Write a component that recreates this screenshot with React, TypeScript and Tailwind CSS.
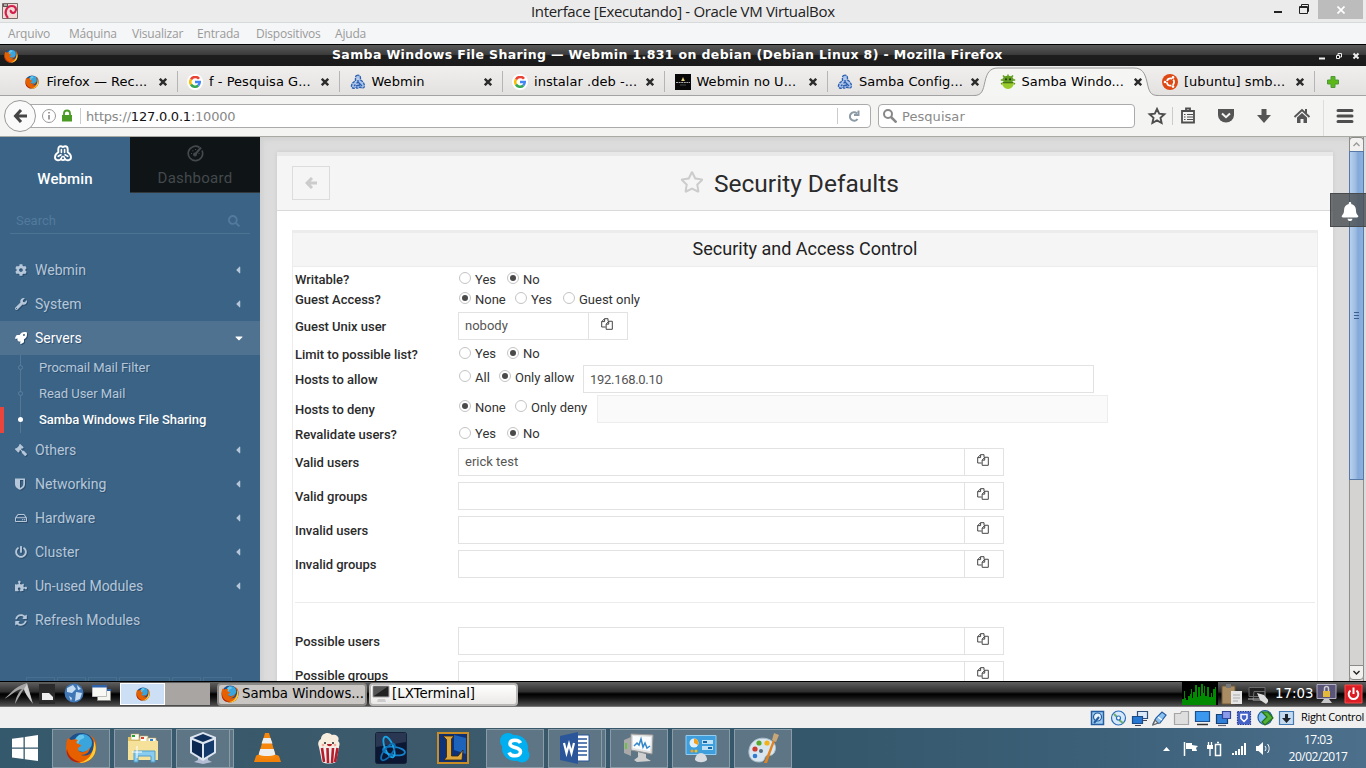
import type { ReactNode } from "react";
import {
  FaBell, FaCaretDown, FaCaretLeft, FaCog, FaGavel, FaPowerOff, FaPuzzlePiece,
  FaRegHdd, FaRegStar, FaRocket, FaSearch, FaShieldAlt, FaSyncAlt, FaWrench,
} from "react-icons/fa";

/* ---------- small drawings ---------- */

function Firefox({ className }: { className: string }) {
  return (
    <svg viewBox="0 0 32 32" className={className}>
      <circle cx="16" cy="16" r="15" fill="#1d4f8c" />
      <circle cx="18" cy="11" r="9" fill="#3aa5dc" />
      <path d="M14 3c4-1 6 1 5 3l-4 2-2 4-5-2z" fill="#64c6ec" />
      <path d="M3 6c1 1 2 1 3 2 3-1 5-1 7 0-2 2-2 3 0 4 2 0 3 1 3 2l-3 2c0 3 2 5 6 4 3-1 5-3 6-5 0 5-4 8-9 8 6 2 12-1 13-9 0-5-2-9-5-11 6 2 8 8 7 14-1 8-7 14-15 14C8 31 1 25 1 17c0-4 0-8 2-11z" fill="#e66000" />
      <path d="M29 9c3 6 2 13-2 17-4 4-9 5-13 5 8-2 15-7 15-22z" fill="#ffcb33" />
      <path d="M2 17c1 7 7 12 14 13C8 32 0 25 2 17z" fill="#b3260e" />
    </svg>
  );
}

function Google() {
  return (
    <span className="flex h-4 w-4 items-center justify-center rounded-full bg-white">
      <svg viewBox="0 0 24 24" className="h-3 w-3" fill="none" strokeWidth="5">
        <path d="M20 5.5A9.5 9.5 0 0 0 4 7" stroke="#ea4335" />
        <path d="M4 7a9.5 9.5 0 0 0 0 10" stroke="#fbbc05" />
        <path d="M4 17a9.5 9.5 0 0 0 14.500 2" stroke="#34a853" />
        <path d="M18.500 19a9.500 9.500 0 0 0 3-7H12" stroke="#4285f4" />
      </svg>
    </span>
  );
}

function WebminMark({ className }: { className: string }) {
  return (
    <svg viewBox="0 0 18 17" className={className} fill="none" stroke="currentColor" strokeWidth="1.900" strokeLinecap="round" strokeLinejoin="round">
      <path d="M4.300 7.200V4.200C4.300 2.400 5.200 1.200 6.700 1.200c1 0 1.700.4 2.300 1 .6-.6 1.300-1 2.300-1 1.500 0 2.400 1.200 2.400 3v3c2 1.200 3.300 3.200 3.300 5 0 1.700-1 2.600-2.200 2.900-1.500.4-2.800 0-3.700-1-.6.600-1.200 1-2.100 1s-1.500-.4-2.100-1c-.9 1-2.200 1.400-3.700 1C2 14.800 1 13.900 1 12.200c0-1.800 1.300-3.800 3.300-5z" />
      <path d="M7.400 4.500v3M10.600 4.500v3M4.200 11.300l2.800-1.500M13.800 11.300L11 9.800M6.900 14.100l1.300-2.600M11.100 14.100l-1.300-2.600" strokeWidth="1.600" />
    </svg>
  );
}

function WebminFav() {
  return (
    <svg viewBox="0 0 16 16" className="h-4 w-4">
      <path d="M6.500 1.500c2-1 4 0 4 2.500v2c2 1 4 3.500 4 6 0 2.500-3 2.500-4.500 1-1.500 1.500-3 1.500-4 .5C3.500 15 1 14 1.500 11.500 2 9 3.500 8 5.500 7c0-2-.5-4.500 1-5.500z" fill="#a9c3ea" stroke="#2c5fae" strokeWidth="1.300" strokeDasharray="3 .8" />
      <path d="M8 4v4l-4 4M8 8l4 4M6 12l4-1" stroke="#2c5fae" strokeWidth="1.300" fill="none" />
      <path d="M8 4v2M5.500 9.500l1 1" stroke="#fff" strokeWidth="1.200" />
    </svg>
  );
}

function Spider() {
  return (
    <svg viewBox="0 0 16 16" className="h-4 w-4">
      <path d="M3 1.500l2 2M8 .5v3M13 1.500l-2 2M.8 6h14.400M1 10l2-1M15 10l-2-1" stroke="#5f9a1c" strokeWidth="1.500" />
      <ellipse cx="8" cy="5.500" rx="5.500" ry="3.800" fill="#62a022" />
      <path d="M2 8.500h12c0 3.500-2.700 6.500-6 6.500s-6-3-6-6.500z" fill="#9acb2d" />
      <path d="M3 8h10v1.300H3z" fill="#47701a" />
      <circle cx="6" cy="5.300" r="1.100" fill="#263c0c" /><circle cx="10" cy="5.300" r="1.100" fill="#263c0c" />
    </svg>
  );
}

function Ubuntu() {
  return (
    <svg viewBox="0 0 16 16" className="h-4 w-4">
      <circle cx="8" cy="8" r="8" fill="#dd4814" />
      <circle cx="8.500" cy="8" r="3.600" fill="none" stroke="#fff" strokeWidth="1.800" strokeDasharray="6.300 1.200" strokeDashoffset="3" />
      <circle cx="3" cy="8" r="1.300" fill="#fff" /><circle cx="11" cy="3.400" r="1.300" fill="#fff" /><circle cx="11" cy="12.600" r="1.300" fill="#fff" />
    </svg>
  );
}

function DarkFav() {
  return (
    <svg viewBox="0 0 16 16" className="h-4 w-4">
      <path d="M0 0h16v16H0z" fill="#080808" />
      <path d="M8 3l1.800 4H6.200z" fill="#e8d27a" />
      <path d="M1 8.500h14" stroke="#aaa" strokeDasharray="2 .6" /><path d="M5 11h6" stroke="#444" />
    </svg>
  );
}

function CopyIcon() {
  return (
    <svg viewBox="0 0 14 14" className="h-3 w-3 text-[#444]" fill="none" stroke="currentColor" strokeWidth="1.150">
      <path d="M5.500 10.500H.8V4.200L4.200.8h4v3M4.200.8v3.400H.8M6 7.200l3-3.400h4.200v9.400H6zM9 3.800v3.400H6" />
    </svg>
  );
}

/* ---------- VirtualBox host window ---------- */

function HostTitle() {
  return (
    <header className="flex h-[23px] items-center border-b border-[#d7dadb] bg-[#ebebeb] font-['Open_Sans',sans-serif]">
      <div className="w-[531px] pl-0.5">
        <svg viewBox="0 0 16 16" className="h-4 w-4">
          <path d="M.5.5h15v15H.5z" fill="#f3d9d6" stroke="#7b6965" />
          <path d="M6 15C1 9 5 3 10 3c4 0 5 4 3 6-2 2-5 0-4-2" fill="none" stroke="#d2204c" strokeWidth="2.200" />
          <path d="M1 1h5v3H1z" fill="#5e5552" /><path d="M2 2h3" stroke="#fff" />
        </svg>
      </div>
      <h1 className="flex-1 whitespace-nowrap text-[15px] tracking-[-0.330px] text-[#222]">Interface [Executando] - Oracle VM VirtualBox</h1>
      <div className="flex h-full items-start">
        <svg viewBox="0 0 46 19" className="h-[19px] w-[46px]" fill="none" stroke="#222">
          <path d="M2 12h8" strokeWidth="2" /><path d="M27.500 6.500h8v7h-8zM27 7.500h9M29.500 6V4.500h7v7H36" />
        </svg>
        <div className="mr-[3px] flex h-[19px] w-[45px] items-center justify-center bg-[#bcbcbc]">
          <svg viewBox="0 0 8 8" className="h-2 w-2" stroke="#fff" strokeWidth="1.700"><path d="M.5.500l7 7M7.500.500l-7 7" /></svg>
        </div>
      </div>
    </header>
  );
}

const hostMenu = [
  { label: "Arquivo", cls: "w-[61px]" },
  { label: "Máquina", cls: "w-[63px]" },
  { label: "Visualizar", cls: "w-[65px]" },
  { label: "Entrada", cls: "w-[59px]" },
  { label: "Dispositivos", cls: "w-[79px]" },
  { label: "Ajuda", cls: "w-[60px]" },
];

function HostMenu() {
  return (
    <nav className="flex h-[21px] items-center bg-[#f5f6f7] pl-2 font-['Open_Sans',sans-serif] text-xs tracking-[-0.2px] text-[#9a9a9a]">
      {hostMenu.map((m) => <span key={m.label} className={m.cls}>{m.label}</span>)}
    </nav>
  );
}

/* ---------- Firefox ---------- */

function GuestTitle() {
  return (
    <div className="flex h-[22px] items-center border-t border-black bg-[linear-gradient(#5a5a5a,#3c3c3c_45%,#1e1e1e_50%,#1a1a1a)] pr-1.5">
      <div className="w-[332px] pl-1"><Firefox className="h-3.5 w-3.5" /></div>
      <div className="flex-1 whitespace-nowrap pb-px font-['DejaVu_Sans',sans-serif] text-[12.500px] font-bold leading-none tracking-[0.370px] text-white">
        Samba Windows File Sharing — Webmin 1.831 on debian (Debian Linux 8) - Mozilla Firefox
      </div>
      <svg viewBox="0 0 42 8" className="h-2 w-[42px]" fill="none" stroke="#eee">
        <path d="M1 6.500h6" strokeWidth="2" /><path d="M18.500 3.500h3v3h-3zM20 3V1.500h3.500V5H22" /><path d="M35.500 1.500l5 5M40.500 1.500l-5 5" strokeWidth="2" />
      </svg>
    </div>
  );
}

const tabs: { title: string; icon: ReactNode; active?: boolean }[] = [
  { title: "Firefox — Rec...", icon: <Firefox className="h-3.5 w-3.5" /> },
  { title: "f - Pesquisa G...", icon: <Google /> },
  { title: "Webmin", icon: <WebminFav /> },
  { title: "instalar .deb -...", icon: <Google /> },
  { title: "Webmin no U...", icon: <DarkFav /> },
  { title: "Samba Config...", icon: <WebminFav /> },
  { title: "Samba Windo...", icon: <Spider />, active: true },
  { title: "[ubuntu] smb...", icon: <Ubuntu /> },
];

function TabBar() {
  return (
    <div className="flex h-[30px] bg-[linear-gradient(#f0efee,#e3e1df)] pl-[15px] font-['DejaVu_Sans',sans-serif] text-[13px] text-black shadow-[inset_0_-1px_0_#a3a3a3]">
      {tabs.map((t, i) => (
        <div key={i} className="relative flex w-[162.500px] shrink-0 items-center pl-[9.500px] pt-0.5">
          {t.active && (
            <svg viewBox="0 0 184 30" className="absolute -left-4 top-0 h-[30px] w-[184px]">
              <path d="M0 29.500c8 0 9-5 11-14S16 2 24 2h136c8 0 11 5 13 14s3 13.500 11 13.500V30H0z" fill="#f5f5f4" />
              <path d="M0 29.500c8 0 9-5 11-14S16 2 24 2h136c8 0 11 5 13 14s3 13.500 11 13.500" fill="none" stroke="#9a9a9a" />
            </svg>
          )}
          <span className="relative flex w-[22px] shrink-0 items-center">{t.icon}</span>
          <span className="relative w-[112px] shrink-0 whitespace-nowrap pb-px tracking-[0.030px]">{t.title}</span>
          <svg viewBox="0 0 8 8" className="relative h-2 w-2 shrink-0" stroke="#2c2c2c" strokeWidth="2.400"><path d="M.8.800l6.400 6.400M7.200.800L.8 7.200" /></svg>
          {i !== 5 && i !== 6 && <i className="absolute right-0 top-[5px] h-[21px] w-px bg-[#b5b5b5]" />}
        </div>
      ))}
      <svg viewBox="0 0 12 12" className="ml-3 mt-2.5 h-3 w-3"><path d="M4 .500h4V4h3.500v4H8v3.500H4V8H.5V4H4z" fill="#5cb815" stroke="#4c9a3d" /></svg>
    </div>
  );
}

function ToolbarIcons() {
  return (
    <svg viewBox="0 0 231 40" className="h-10 w-[231px]" fill="#555">
      <path d="M22 13l2.200 4.700 5.200.6-3.900 3.500 1.100 5.200L22 24.400 17.400 27l1.100-5.200-3.900-3.500 5.200-.6z" fill="none" stroke="#4e4e4e" strokeWidth="1.900" />
      <path d="M37.500 11v18" stroke="#ccc" />
      <path d="M47 15h12v11.500H47zM51 14.500v-2h4v2" fill="none" stroke="#4e4e4e" strokeWidth="1.800" />
      <path d="M49 18.500h1.500M52 18.500h6M49 21h1.500M52 21h6M49 23.500h1.500M52 23.500h6" stroke="#4e4e4e" strokeWidth="1.200" />
      <path d="M83 13h16v6a8 7.500 0 0 1-16 0z" />
      <path d="M87 17.500l4 3.700 4-3.700" fill="none" stroke="#f5f5f4" strokeWidth="2" />
      <path d="M126.500 13h5v6h4.500l-7 8-7-8h4.500z" />
      <path d="M159.500 21l7.500-7 7.500 7" fill="none" stroke="#555" strokeWidth="1.900" />
      <path d="M162 21.500l5-4.500 5 4.500V27h-3.500v-4h-3v4H162zM170 13h2v4h-2z" />
      <path d="M188.500 4v36" stroke="#ddd" />
      <path d="M203 14.500h14M203 20h14M203 25.500h14" stroke="#4e4e4e" strokeWidth="3" strokeLinecap="round" />
    </svg>
  );
}

function Toolbar() {
  return (
    <div className="flex h-[41px] items-center border-b border-[#a9aaa3] bg-[#f4f4f2] pl-1 font-['DejaVu_Sans',sans-serif] text-[13px]">
      <div className="z-10 flex h-8 w-8 shrink-0 items-center justify-center rounded-full border border-[#999] bg-[#fafafa]">
        <svg viewBox="0 0 14 14" className="h-3.5 w-3.5" fill="none" stroke="#454545" strokeWidth="3"><path d="M8 1L2.500 7 8 13M3 7h11" /></svg>
      </div>
      <div className="-ml-2 flex h-6 w-[843px] shrink-0 items-center rounded-r-sm border border-[#aaa] bg-white">
        <svg viewBox="0 0 50 22" className="h-[22px] w-[50px]">
          <circle cx="20" cy="11" r="6.500" fill="none" stroke="#999" /><path d="M20 10v4.500M20 7v1.600" stroke="#888" strokeWidth="1.600" />
          <path d="M33 10h10v6.500H33z" fill="#4a9b26" /><path d="M35 10V8.500a3 3 0 0 1 6 0V10" fill="none" stroke="#4a9b26" strokeWidth="1.800" />
        </svg>
        <span className="ml-px h-4 w-px bg-[#ccc]" />
        <span className="ml-[5px] flex-1 pt-px tracking-[-0.220px] text-[#888]">https://<span className="text-[#111]">127.0.0.1</span>:10000</span>
        <span className="h-4 w-px bg-[#ccc]" />
        <svg viewBox="0 0 12 12" className="ml-2.5 mr-[10px] h-3 w-3" fill="none" stroke="#8c9aa5" strokeWidth="2"><path d="M9 3.500A4.200 4.200 0 1 0 9.500 9M10.500.500V5H6" /></svg>
      </div>
      <div className="ml-[7px] flex h-6 w-[257px] shrink-0 items-center rounded-sm border border-[#aaa] bg-white pl-1">
        <svg viewBox="0 0 14 14" className="h-3.5 w-3.5" fill="none" stroke="#888" strokeWidth="2"><circle cx="5" cy="5" r="4" /><path d="M8 8l5.500 5.500" strokeWidth="2.500" /></svg>
        <span className="ml-[5px] pt-px tracking-[0.050px] text-[#8a8a8a]">Pesquisar</span>
      </div>
      <ToolbarIcons />
    </div>
  );
}

/* ---------- Webmin sidebar ---------- */

function MenuRow({ icon, label, open, leaf }: { icon: ReactNode; label: string; open?: boolean; leaf?: boolean }) {
  return (
    <li className={open ? "flex h-[34px] items-center bg-[#4f7291] pl-[15px] pr-[15px] text-white" : "flex h-[34px] items-center pl-[15px] pr-4 text-[#b6c7da]"}>
      <span className="w-5 text-xs [filter:drop-shadow(1px_1px_0_#2b4d6b)]">{icon}</span>
      <span className="flex-1 text-[14px] [text-shadow:1px_1px_0_#2f5170]">{label}</span>
      {!leaf && (open ? <FaCaretDown className="h-3 w-3" /> : <FaCaretLeft className="h-3 w-3" />)}
    </li>
  );
}

function SubRow({ label, current }: { label: string; current?: boolean }) {
  return (
    <li className={current ? "flex h-[26px] items-center border-l-4 border-[#e8453c] pl-[13px] font-medium text-white" : "flex h-[26px] items-center pl-[17px] text-[#b6c7da]"}>
      <span className="relative flex w-[22px] self-stretch">
        <i className="ml-[3px] w-px bg-[#557795]" />
        <i className={current ? "absolute left-[1px] top-[10px] h-[5px] w-[5px] rounded-full bg-white" : "absolute left-[1px] top-[10px] h-[5px] w-[5px] rounded-full border border-[#5c7f9e] bg-[#3a6386]"} />
      </span>
      <span className="text-[13px] tracking-[-0.050px] [text-shadow:1px_1px_0_#2f5170]">{label}</span>
    </li>
  );
}

function Sidebar() {
  return (
    <aside className="flex w-[260px] shrink-0 flex-col bg-[#3a6386]">
      <div className="flex h-[56px]">
        <div className="flex w-[130px] flex-col items-center pt-2 text-white">
          <WebminMark className="mr-1 h-[17px] w-[18px]" />
          <span className="mt-[7px] text-[15px] font-medium leading-5 tracking-[0.100px]">Webmin</span>
        </div>
        <div className="flex w-[130px] flex-col items-center border-b border-[#33383b] bg-[#0f1416] pt-2 text-[#43494d]">
          <svg viewBox="0 0 17 17" className="h-[17px] w-[17px]" fill="none" stroke="currentColor" strokeWidth="1.700">
            <path d="M12.500 2.500A7.200 7.200 0 1 0 15 5.500" /><circle cx="8" cy="9.500" r="2" fill="currentColor" stroke="none" />
            <path d="M8 9.500L14 2.500" strokeWidth="2" /><path d="M4 8.500h1M5.500 5.500l.7.700M8.500 4v1M11.500 8.500h1" strokeWidth="1.200" />
          </svg>
          <span className="mt-1.5 text-[15px] leading-5 tracking-[0.250px]">Dashboard</span>
        </div>
      </div>
      <div className="mx-2.5 mt-[14px] flex h-[27px] items-center border-b border-[#4b7392] pl-1.5 pr-2.5 pt-0.5 text-[13px] text-[#537a9c]">
        <span className="flex-1">Search</span><FaSearch className="h-3 w-3" />
      </div>
      <ul className="mt-[19px]">
        <MenuRow icon={<FaCog />} label="Webmin" />
        <MenuRow icon={<FaWrench />} label="System" />
        <MenuRow icon={<FaRocket />} label="Servers" open />
        <ul>
          <SubRow label="Procmail Mail Filter" />
          <SubRow label="Read User Mail" />
          <SubRow label="Samba Windows File Sharing" current />
        </ul>
        <MenuRow icon={<FaGavel className="-scale-x-100" />} label="Others" />
        <MenuRow icon={<svg viewBox="0 0 11 12" className="h-3 w-[11px]" fill="currentColor"><path fillRule="evenodd" d="M0 .5h10V6c0 3-2.500 4.800-5 5.800C2.500 10.800 0 9 0 6zM5 2v7.900c1.700-.8 3.300-2 3.300-4V2z" /></svg>} label="Networking" />
        <MenuRow icon={<FaRegHdd />} label="Hardware" />
        <MenuRow icon={<FaPowerOff />} label="Cluster" />
        <MenuRow icon={<FaPuzzlePiece />} label="Un-used Modules" />
        <MenuRow icon={<FaSyncAlt />} label="Refresh Modules" leaf />
      </ul>
      <div className="mt-auto flex h-1 gap-0.5 pl-[26px]">
        {["w-[29px]", "w-[29px]", "w-[29px]", "w-[51px]", "w-[29px]", "w-[29px]"].map((w, i) => (
          <span key={i} className={`${w} border border-b-0 border-[#486f90]`} />
        ))}
      </div>
    </aside>
  );
}

/* ---------- Samba form ---------- */

function Radio({ label, on, className }: { label: string; on?: boolean; className: string }) {
  return (
    <span className={`flex shrink-0 items-center ${className}`}>
      <i className="mb-[3px] mr-1 flex h-3 w-3 items-center justify-center rounded-full border border-[#c4c4c4] bg-white">
        {on && <i className="h-1.5 w-1.5 rounded-full bg-[#4a4a4a]" />}
      </i>
      {label}
    </span>
  );
}

function Row({ label, className, children }: { label: string; className: string; children: ReactNode }) {
  return (
    <div className={`flex shrink-0 items-center pl-0.5 ${className}`}>
      <span className="w-[163px] shrink-0 pt-0.5 font-medium tracking-[-0.030px] text-[#2b2b2b]">{label}</span>
      {children}
    </div>
  );
}

function Picker({ value, className }: { value?: string; className: string }) {
  return (
    <div className="mb-px flex h-7 border border-[#e2e2e2]">
      <span className={`border-r border-[#e2e2e2] pl-1.5 leading-[25px] text-[#555] ${className}`}>{value}</span>
      <span className="flex w-[38px] items-center justify-center pb-[3px] pr-[3px]"><CopyIcon /></span>
    </div>
  );
}

function Content() {
  return (
    <main className="min-w-0 flex-1 overflow-hidden bg-[#dcdcdc] pl-[17px] pr-4 pt-[15px] shadow-[inset_3px_3px_4px_#d2d2d2]">
      <section className="h-[560px] border-t-4 border-[#e8e8e8] bg-white shadow-[0_0_4px_#c8c8c8]">
        <div className="flex h-[55px] items-center border-b border-[#d9d9d9] bg-[#f5f5f5] pl-[15px]">
          <div className="flex h-[34px] w-[38px] items-center justify-center border border-[#dcdcdc] text-[#ccc]">
            <svg viewBox="0 0 12 12" className="h-3 w-3" fill="none" stroke="currentColor" strokeWidth="3"><path d="M7 1L2 6l5 5M2.500 6H12" /></svg>
          </div>
          <div className="ml-[350px] flex items-center">
            <FaRegStar className="mb-0.5 h-6 w-6 text-[#ccc]" />
            <h2 className="ml-2.5 whitespace-nowrap pt-0.5 text-[24.500px] leading-8 text-[#2b2b2b]">Security Defaults</h2>
          </div>
        </div>
        <div className="ml-[15px] mr-[15px] mt-[19px] border-x border-t-[3px] border-[#ececec]">
          <h3 className="h-[34px] border-b border-[#ececec] bg-[#f5f5f5] text-center text-[18px] leading-8 text-[#222]">Security and Access Control</h3>
          <div className="flex flex-col text-[13px] text-[#333]">
            <Row label="Writable?" className="h-[22px] pt-0.5"><Radio label="Yes" className="w-12 pl-px pt-px" /><Radio label="No" on className="pl-px pt-px" /></Row>
            <Row label="Guest Access?" className="h-5"><Radio label="None" on className="w-14 pl-px pt-px" /><Radio label="Yes" className="w-12 pl-px pt-px" /><Radio label="Guest only" className="pl-px pt-px" /></Row>
            <Row label="Guest Unix user" className="h-[34px]"><Picker value="nobody" className="w-[130px]" /></Row>
            <Row label="Limit to possible list?" className="h-[21px]"><Radio label="Yes" className="w-12 pl-px pt-px" /><Radio label="No" on className="pl-px pt-px" /></Row>
            <Row label="Hosts to allow" className="h-[30px]">
              <Radio label="All" className="mb-[3px] w-10 pl-px" /><Radio label="Only allow" on className="mb-[3px] w-[85px] pl-px" />
              <span className="h-7 w-[511px] border border-[#e2e2e2] pl-1.5 leading-[27px] tracking-[-0.300px] text-[#555]">192.168.0.10</span>
            </Row>
            <Row label="Hosts to deny" className="h-[30px]">
              <Radio label="None" on className="mb-[3px] w-14 pl-px" /><Radio label="Only deny" className="mb-[3px] w-[83px] pl-px" />
              <span className="h-7 w-[511px] border border-[#ededed] bg-[#fafafa]" />
            </Row>
            <Row label="Revalidate users?" className="h-[21px] pb-0.5"><Radio label="Yes" className="w-12 pl-px pt-px" /><Radio label="No" on className="pl-px pt-px" /></Row>
            <Row label="Valid users" className="h-[34px]"><Picker value="erick test" className="w-[506px]" /></Row>
            <Row label="Valid groups" className="h-[34px]"><Picker className="w-[506px]" /></Row>
            <Row label="Invalid users" className="h-[34px]"><Picker className="w-[506px]" /></Row>
            <Row label="Invalid groups" className="h-[34px]"><Picker className="w-[506px]" /></Row>
            <hr className="mx-0.5 mb-[21px] mt-[21px] border-[#ececec]" />
            <Row label="Possible users" className="h-[34px]"><Picker className="w-[506px]" /></Row>
            <Row label="Possible groups" className="h-[34px]"><Picker className="w-[506px]" /></Row>
          </div>
        </div>
      </section>
    </main>
  );
}

function Scrollbar() {
  return (
    <div className="flex w-[17px] shrink-0 bg-[#dcdcdc] pr-0.5">
      <div className="flex w-[15px] flex-col border-x border-[#8f8f8c] bg-[#d5d3d1]">
        <div className="-mx-px flex h-[14px] items-center justify-center rounded-t border border-b-0 border-[#8a8a88] bg-[#f2f1f0]">
          <svg viewBox="0 0 7 5" className="h-[5px] w-[7px]" fill="none" stroke="#999" strokeWidth="1.400"><path d="M.5 4L3.500 1l3 3" /></svg>
        </div>
        <div className="-mx-px flex h-[329px] flex-col items-center justify-center gap-0.5 border border-[#5879a5] bg-[linear-gradient(90deg,#b8d0ee,#9cbbe2_45%,#85aad9_60%,#8bb0df)]">
          <i className="h-px w-[5px] bg-[#3e5f8c]" /><i className="h-px w-[5px] bg-[#3e5f8c]" /><i className="h-px w-[5px] bg-[#3e5f8c]" />
        </div>
        <div className="flex-1" />
        <div className="-mx-px mb-px flex h-[15px] items-center justify-center rounded-b border border-[#8a8a88] bg-[#f2f1f0]">
          <svg viewBox="0 0 7 5" className="h-[5px] w-[7px]" fill="none" stroke="#222" strokeWidth="1.400"><path d="M.5 1l3 3 3-3" /></svg>
        </div>
      </div>
    </div>
  );
}

/* ---------- guest panel ---------- */

function GuestPanel() {
  return (
    <div className="flex h-[26px] shrink-0 items-center border-b border-t border-b-[#777] border-t-black bg-[linear-gradient(#606060,#2e2e2e_40%,#000_50%,#111_65%,#505050)] font-['DejaVu_Sans',sans-serif] text-[13.330px]">
      <svg viewBox="0 0 120 24" className="h-6 w-[120px]">
        <path d="M4 17c5-3 9-12 23-16l6 21c-5-6-8-11-9-15-3 4-5 8-9 15 1-7 3-11 7-15-7 1-11 7-18 10z" fill="#a5a5a5" />
        <path d="M24 7l3-5 5 18c-4-5-7-9-8-13z" fill="#d2d2d2" />
        <path d="M39 2h16v20H39z" fill="#2b2b2b" /><path d="M42 11h7l4 4v3H42z" fill="#eee" />
        <circle cx="74" cy="11" r="9.500" fill="#3f76b5" />
        <path d="M67 6l6-3 3 4-4 4-5-1zM76 10l6 1-2 6-5 2zM69 14l3 2-1 3zM77 3l4 4-3 1z" fill="#c5dcf1" />
        <path d="M97.500 8.500h13v10h-13z" fill="#f5f5f0" stroke="#888" /><path d="M98 7h13v2H98z" fill="#2d62ab" /><path d="M92.500 3.500h14v11h-14z" fill="#f8f8f5" stroke="#bbb" /><path d="M92 3h15v2.500H92z" fill="#2d62ab" />
      </svg>
      <div className="flex h-[22px] w-[45px] items-center justify-center border border-white bg-[#ccdff5]"><Firefox className="h-3.5 w-3.5" /></div>
      <div className="h-[22px] w-[45px] bg-[#a9a5a2]" />
      <div className="ml-[7px] flex h-[23px] w-[150px] shrink-0 items-center whitespace-nowrap rounded-sm border-2 border-[#8b8986] bg-[#c9c6c3] pl-0.5 tracking-[-0.050px] text-black">
        <Firefox className="mr-[3px] h-[18px] w-[18px] shrink-0" />Samba Windows...
      </div>
      <div className="ml-0.5 flex h-[23px] w-[149px] items-center rounded border-2 border-[#b9b7b5] bg-[linear-gradient(#fff,#ebe9e7)] pl-px text-black">
        <svg viewBox="0 0 18 18" className="mr-0.5 h-[18px] w-[18px]"><path d="M1 1h16v11H1z" fill="#222" stroke="#aaa" /><path d="M2 11L15 2H2z" fill="#555" /><path d="M6 14h7l1 3H5z" fill="#ccc" /></svg>
        [LXTerminal]
      </div>
      <div className="ml-auto flex h-6 items-center">
        <svg viewBox="0 0 86 24" className="h-6 w-[86px]">
          <path d="M0 0h36v23H0z" fill="#000" />
          <path d="M0 23v-6h2V9h1v7h1v2h2v-4h2v9zM8 23V12h1V7h1v9h1v-6h2V3h2v12h1V5h2v9h1V2h2v9h1V4h1v10h2V5h2v10h2v-4h1v4h1V7h2V5h1v18z" fill="#008a00" />
          <path d="M40 4h13v18H40z" fill="#a98c61" stroke="#6e5a3d" /><path d="M44 2h5v4h-5z" fill="#777" /><path d="M49 9h11v13H49z" fill="#e6e6e6" /><path d="M51 13h7M51 16h7M51 19h5" stroke="#aaa" />
          <path d="M67 5.500h16v9H67zM72 9.500h11v9H71z" fill="#202020" stroke="#6c6c6c" /><path d="M75 11l7 2 5 6-3 3-6-4z" fill="#ddd" /><path d="M66 17h12" stroke="#bbb" />
        </svg>
        <span className="w-[46px] pl-[7px] text-white">17:03</span>
        <svg viewBox="0 0 52 24" className="h-6 w-[52px]">
          <path d="M3 2.500h19v14H3z" fill="#5a5478" stroke="#b2afc3" /><path d="M9 9h7v6H9z" fill="#e2b93a" /><path d="M10.500 9V6.500a2 2 0 0 1 4 0V9" fill="none" stroke="#ccc" strokeWidth="1.500" /><path d="M10 17h5l3 4H7z" fill="#c7c7c7" />
          <path d="M31 3h17v18H31z" fill="#dc1d24" stroke="#fa4c4c" /><path d="M36.500 8.500a4.800 4.800 0 1 0 6 0M39.500 5.500v6.500" fill="none" stroke="#fff" strokeWidth="2" />
        </svg>
      </div>
    </div>
  );
}

/* ---------- VirtualBox status bar ---------- */

function StatusBar() {
  return (
    <div className="flex h-[21px] shrink-0 items-center justify-end bg-[#f0f0f0] pr-px font-['Open_Sans',sans-serif]">
      <svg viewBox="0 0 210 20" className="h-5 w-[210px]" strokeWidth="1.200">
        <path d="M3.500 3.500h12v13h-12z" fill="#9ecbf0" stroke="#245ea0" strokeWidth="1.500" /><circle cx="9.500" cy="9" r="4" fill="#e8f4fd" stroke="#245ea0" /><path d="M6 15l5-6" stroke="#245ea0" strokeWidth="2" />
        <circle cx="30.500" cy="10" r="7" fill="#d6e9fa" stroke="#2b6db8" /><path d="M26 6l4 4M31 12l4 3" stroke="#6cae6c" strokeWidth="2" /><circle cx="30.500" cy="10" r="2" fill="#fff" stroke="#2b6db8" />
        <path d="M49.500 3.500h10v7h-10z" fill="#dbe9f8" stroke="#2d4f7a" /><path d="M44.500 8.500h10v7h-10z" fill="#2777d4" stroke="#1b4c86" /><path d="M47 17.500h6M55 12.500h4" stroke="#445" />
        <path d="M65 16l3-6 6-6 4 3-6 8z" fill="#8cc2f2" stroke="#245ea0" /><path d="M65 17l2-5 3 3z" fill="#eee" stroke="#666" /><path d="M70 9l4 3" stroke="#fff" />
        <path d="M86.500 5.500h6l1-2h7v13h-14z" fill="#dedede" stroke="#a5a5a5" />
        <path d="M107.500 3.500h14v10h-14z" fill="#3a98ef" stroke="#1d4f8d" /><path d="M109 16.500h11" stroke="#333" strokeWidth="1.500" />
        <path d="M128.500 6.500h11v9h-11z" fill="#2f7ed8" stroke="#163f74" /><path d="M134.500 3.500h8v7h-8z" fill="#8b9bea" stroke="#35479b" /><path d="M130 17.500h8" stroke="#667" />
        <path d="M149.500 3.500h13v13h-13z" fill="#4562c9" stroke="#293f91" strokeDasharray="1.500 1" /><path d="M153 6.500h6v4l-3 3-3-3z" fill="none" stroke="#fff" strokeWidth="1.500" />
        <circle cx="177" cy="9.500" r="7" fill="#7ebcf1" stroke="#245ea0" /><path d="M174 4l5 5-5 5 3 3 8-7-5-6z" fill="#51b139" stroke="#257114" />
        <path d="M191.500 3.500h14v13h-14z" fill="#c3daef" stroke="#4279b0" /><path d="M197 6h3v4h3l-4.500 5-4.500-5h3z" fill="#1d242b" />
      </svg>
      <span className="ml-[3px] w-[64px] whitespace-nowrap text-[11px] tracking-[-0.320px] text-black">Right Control</span>
    </div>
  );
}

/* ---------- Windows taskbar ---------- */

const taskIcons: { open?: boolean; stacked?: boolean; art: ReactNode }[] = [
  { open: true, art: <Firefox className="h-8 w-8" /> },
  {
    open: true,
    art: (
      <svg viewBox="0 0 32 32" className="h-8 w-8">
        <path d="M1 5h11l2 3h16v20H1z" fill="#e3c566" /><path d="M4 2h8v6H4zM13 4h8v6h-8zM20 6h9v5h-9z" fill="#fdfdf4" stroke="#b8a35e" strokeWidth=".6" />
        <path d="M5 3h3v2H5z" fill="#22a334" /><path d="M14 5h3v2h-3z" fill="#d9432f" /><path d="M23 7h3v2h-3z" fill="#2f85d4" />
        <path d="M1 9h30v19H1z" fill="#f5e19a" /><path d="M7 30V19h21v11h-4v-6H11v6z" fill="#8accef" stroke="#4f9dcb" />
        <path d="M10 14v12M5 20h10" stroke="#fff" />
      </svg>
    ),
  },
  {
    open: true, stacked: true,
    art: (
      <svg viewBox="0 0 32 32" className="h-8 w-8">
        <path d="M11 25h10v3l4 2-9 2-9-2 4-2z" fill="#b6bed6" />
        <path d="M3 5l13-5 13 5v16l-13 8-13-8z" fill="#dce4f0" /><path d="M6 6l10-4 10 4-10 4z" fill="#10305c" />
        <path d="M5 8l10 4v14L5 20z" fill="#0c2850" /><path d="M27 8l-10 4v14l10-6z" fill="#143a6c" />
      </svg>
    ),
  },
  {
    art: (
      <svg viewBox="0 0 32 32" className="h-8 w-8">
        <path d="M6 23h20l2 1 2 6H3l2-6z" fill="#f28109" /><path d="M14 1h4l7 24c-4 3-14 3-18 0z" fill="#f6860c" />
        <path d="M12.500 6h7l2 5.500h-11zM9.300 17h13.400l1.700 5.500c-4 2-13 2-16.800 0z" fill="#eee" />
      </svg>
    ),
  },
  {
    art: (
      <svg viewBox="0 0 32 32" className="h-8 w-8">
        <path d="M6 15c-2-4 0-7 2-8 0-6 8-8 11-4 5-1 8 3 6 6 3 2 1 6 0 8z" fill="#f6eddf" />
        <path d="M6 15h20l-3 15c-4 2-10 2-14 0z" fill="#f3eeee" /><path d="M9 16l2 14M14.500 16l.5 15M20 16l-1 15M24.500 16L22 30" stroke="#b51d2c" strokeWidth="2.600" />
        <circle cx="12" cy="11" r="1" fill="#222" /><circle cx="20" cy="11" r="1" fill="#222" /><path d="M14 12h5c0 3-5 3-5 0z" fill="#b51d2c" />
        <circle cx="10" cy="13" r="1.300" fill="#f6a6a0" /><circle cx="22" cy="13" r="1.300" fill="#f6a6a0" />
      </svg>
    ),
  },
  {
    art: (
      <svg viewBox="0 0 32 32" className="h-8 w-8">
        <rect x=".5" y=".5" width="31" height="31" rx="2" fill="#0b1733" stroke="#162238" /><path d="M1 1h30v9L1 15z" fill="#293752" />
        <g fill="none" strokeWidth="1.800">
          <ellipse cx="19" cy="19" rx="11" ry="4.200" stroke="#1583cc" transform="rotate(8 19 19)" />
          <ellipse cx="14" cy="15" rx="11" ry="4.200" stroke="#18a6e8" transform="rotate(68 14 15)" />
          <ellipse cx="13" cy="20" rx="10" ry="4" stroke="#0f6fb5" transform="rotate(-52 13 20)" />
        </g>
      </svg>
    ),
  },
  {
    art: (
      <svg viewBox="0 0 32 32" className="h-8 w-8">
        <path d="M1 1h30v30H1z" fill="#0e3275" stroke="#c98d25" strokeWidth="2" /><path d="M17 3l12 3v16l-12-4z" fill="#1d62bb" />
        <path d="M6 4h11l-2.500 3v17h6.500l5-6-1 10H7l2.500-3V7.500z" fill="#dba63c" stroke="#3a2306" strokeWidth=".8" />
      </svg>
    ),
  },
  {
    open: true,
    art: (
      <svg viewBox="0 0 32 32" className="h-8 w-8">
        <circle cx="16" cy="16" r="13" fill="#00aff0" /><circle cx="9" cy="9" r="8" fill="#00aff0" /><circle cx="23" cy="23" r="7.500" fill="#00aff0" />
        <path d="M21.500 11c-1-2-3-2.800-5.500-2.800-3 0-5 1.300-5 3.600 0 5 10.500 2.500 10.500 8 0 2.500-2.500 4-5.500 4-2.800 0-5-1-6-3.300" fill="none" stroke="#fff" strokeWidth="3.600" />
      </svg>
    ),
  },
  {
    open: true, stacked: true,
    art: (
      <svg viewBox="0 0 32 32" className="h-8 w-8">
        <path d="M17 3h13v26H17z" fill="#fff" stroke="#2b579a" /><path d="M19 7h9M19 11h9M19 15h9M19 19h9M19 23h9" stroke="#2b579a" strokeWidth="1.500" />
        <path d="M1 4l18-4v32L1 28z" fill="#2b579a" /><path d="M5 11l2.500 10L10 12l2.500 9L15 11" fill="none" stroke="#fff" strokeWidth="2.200" />
      </svg>
    ),
  },
  {
    open: true,
    art: (
      <svg viewBox="0 0 32 32" className="h-8 w-8">
        <path d="M1 8l7-3v19l-7-3z" fill="#a9a9a9" /><path d="M2 11h2v6H2z" fill="#6cc04a" />
        <path d="M8 2l22 1-1 19-21-4z" fill="#e2e2e2" stroke="#999" /><path d="M10 4l18 1-1 14-17-3z" fill="#fafdff" />
        <path d="M11 14l3-3 2 2 2-6 2 8 2-4 2 5 3-2" fill="none" stroke="#3587c9" strokeWidth="1.500" /><path d="M15 20l8 2v4l5 3-14 1-3-2 4-3z" fill="#cfcfcf" />
      </svg>
    ),
  },
  {
    open: true,
    art: (
      <svg viewBox="0 0 32 32" className="h-8 w-8">
        <path d="M1 3.500h30v19H1z" fill="#3f9fdd" stroke="#93cdf1" /><circle cx="9" cy="11" r="4.500" fill="#dff0fb" /><path d="M9 11V6.500a4.500 4.500 0 0 1 4 6.500z" fill="#f5a01c" />
        <path d="M17 8h11v4H17zM17 14h11v4H17z" fill="#bfe1f6" /><path d="M18 9h4v2h-4zM23 15h4v2h-4z" fill="#1667a8" /><circle cx="7" cy="19" r="1.500" fill="#f5a01c" /><circle cx="11" cy="19" r="1.500" fill="#f5c01c" />
        <path d="M10 28c0-4 3-7 6-7s6 3 6 7c-3 3-9 3-12 0z" fill="#d8dce0" />
      </svg>
    ),
  },
  {
    open: true,
    art: (
      <svg viewBox="0 0 32 32" className="h-8 w-8">
        <path d="M2 18C3 9 12 4 21 7c8 3 9 9 6 14-3 4-5 1-8 3-2 2-1 6-7 6C5 30 1 25 2 18z" fill="#d9e6f0" stroke="#a9bcc9" />
        <circle cx="8" cy="17" r="2.600" fill="#cc3b2f" /><circle cx="12" cy="11" r="2.600" fill="#58a82e" /><circle cx="20" cy="11" r="2.600" fill="#f2b21a" /><circle cx="8" cy="24" r="2.300" fill="#2f7cd0" /><circle cx="14" cy="19" r="2" fill="#54707f" />
        <path d="M17 31l9-23 2 1-8 22z" fill="#e08423" /><path d="M25 8l2-7 5 2-3 7z" fill="#c9a678" />
      </svg>
    ),
  },
];

function Taskbar() {
  return (
    <footer className="flex h-10 shrink-0 items-center bg-[linear-gradient(90deg,#35596c,#3c5a6b_30%,#34576b_60%,#3c6078_80%,#4c6f8c)] text-white">
      <div className="flex w-[50px] justify-center">
        <svg viewBox="0 0 26 26" className="h-[26px] w-[26px]" fill="#fff"><path d="M0 3.800l11.500-1.600v10.300H0zM12.800 2L26 0v12.500H12.800zM0 13.700h11.500V24L0 22.400zM12.800 13.700H26V26l-13.200-1.800z" /></svg>
      </div>
      {taskIcons.map((t, i) => (
        <div key={i} className="flex h-10 w-[62px] shrink-0 items-center px-0.5">
          <div className={t.open ? (t.stacked ? "flex h-[39px] w-[54px] items-center justify-center border border-[#8a9ca8] bg-[#5d7584]" : "flex h-[39px] w-[58px] items-center justify-center border border-[#8a9ca8] bg-[#5d7584]") : "flex h-[39px] w-[58px] items-center justify-center"}>
            {t.art}
          </div>
          {t.stacked && <i className="h-[39px] w-1 border border-l-0 border-[#8a9ca8] bg-[#5d7584]" />}
        </div>
      ))}
      <svg viewBox="0 0 110 20" className="ml-auto h-5 w-[110px]" fill="#fff">
        <path d="M1 13l3.500-4L8 13z" />
        <path d="M22.500 4v14" stroke="#fff" strokeWidth="1.500" /><path d="M24 5h6v6h-6z" /><path d="M30 7l6 1-2 2 1 3h-5z" />
        <path d="M53.500 6.500h5v11h-5zM55 4.500h2" fill="none" stroke="#fff" strokeWidth="1.500" /><path d="M46.500 4v4M49.500 4v4M48 10v8" stroke="#fff" strokeWidth="1.300" /><path d="M45 7h6v4h-6z" />
        <path d="M70 15h2v2h-2zM73 13h2v4h-2zM76 11h2v6h-2zM79 8h2v9h-2zM82 5h2v12h-2z" />
        <path d="M94 8h2.500L101 4v13l-4.500-4H94z" /><path d="M103 8c1.200 1.500 1.200 3.500 0 5M105.500 6c2.200 2.500 2.200 6.500 0 9" fill="none" stroke="#fff" />
      </svg>
      <div className="ml-[16px] mr-[18px] flex w-[60px] flex-col items-center whitespace-nowrap font-['Open_Sans',sans-serif] text-xs leading-[17px] tracking-[-0.480px]">
        <span>17:03</span><span>20/02/2017</span>
      </div>
    </footer>
  );
}

export default function App() {
  return (
    <div className="relative flex h-[768px] w-[1366px] flex-col overflow-hidden bg-white">
      <HostTitle />
      <HostMenu />
      <GuestTitle />
      <TabBar />
      <Toolbar />
      <div className="flex h-[544px] shrink-0 overflow-hidden font-[Roboto,sans-serif]">
        <Sidebar />
        <Content />
        <Scrollbar />
      </div>
      <GuestPanel />
      <StatusBar />
      <Taskbar />
      <div className="absolute right-0 top-[193px] flex h-[34px] w-9 items-center justify-center border border-r-0 border-[#484b4d] bg-[#4a4e50]/80 text-white">
        <FaBell className="ml-0.5 mt-0.5 h-[19px] w-[18px]" />
      </div>
    </div>
  );
}
